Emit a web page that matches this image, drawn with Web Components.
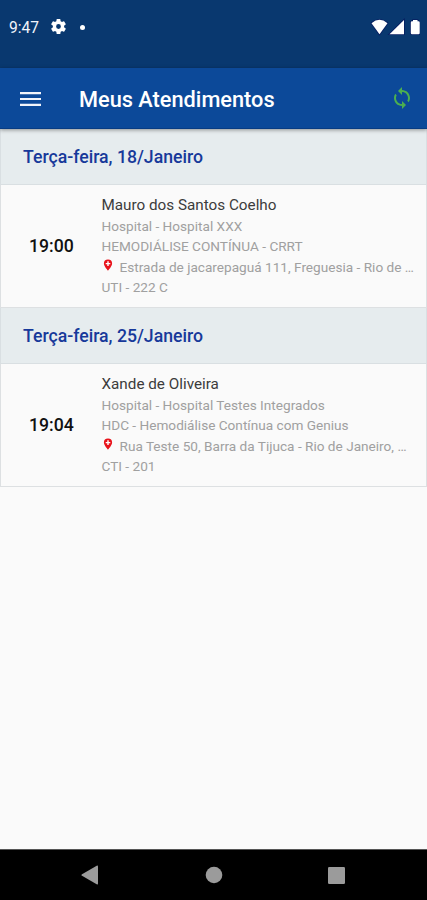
<!DOCTYPE html>
<html lang="pt-BR">
<head>
<meta charset="utf-8">
<meta name="viewport" content="width=device-width, initial-scale=1">
<title>Meus Atendimentos</title>
<style>
html,body{margin:0;height:100%}
body{background:#fafafa;font-family:Roboto,"Liberation Sans",sans-serif;overflow:hidden}
</style>
</head>
<body>
<care-app></care-app>
<script>
const define = (name, html) => {
  customElements.define(name, class extends HTMLElement {
    constructor() {
      super();
      const t = document.createElement('template');
      t.innerHTML = html;
      this.attachShadow({mode: 'open'}).append(t.content.cloneNode(true));
    }
  });
};

define('status-bar', `
<style>
:host{display:flex;height:68px;box-sizing:border-box;background:#09386f;color:#f1f4fb;padding:17px 7px 0 9px;align-items:flex-start;font-size:15.600px;line-height:23px}
time{width:42px;white-space:nowrap}
svg{display:block;flex:none}
.dot{width:5px;height:5px;border-radius:50%;background:#fff;margin:8px 0 0 13.500px}
.sp{flex:1}
</style>
<time>9:47</time>
<svg width="15" height="15" viewBox="2 2 20 20" fill="#fff" style="margin-top:2px"><path d="M19.4 13a7.500 7.500 0 0 0 0-2l2.100-1.650c.2-.15.25-.42.12-.64l-2-3.460a.5.5 0 0 0-.61-.22l-2.490 1a7.300 7.300 0 0 0-1.690-.98l-.38-2.650A.49.49 0 0 0 14 2h-4a.49.49 0 0 0-.49.42l-.38 2.650c-.61.25-1.170.59-1.690.98l-2.490-1a.5.5 0 0 0-.61.22l-2 3.460a.5.5 0 0 0 .12.64L4.570 11a7.900 7.900 0 0 0 0 2l-2.110 1.650a.5.5 0 0 0-.12.64l2 3.460c.12.22.39.3.61.22l2.490-1c.52.4 1.080.73 1.690.98l.38 2.650c.03.24.24.42.49.42h4c.25 0 .46-.18.49-.42l.38-2.650c.61-.25 1.170-.59 1.690-.98l2.490 1c.23.09.49 0 .61-.22l2-3.460a.5.5 0 0 0-.12-.64zM12 15.200a3.200 3.200 0 1 1 0-6.400 3.200 3.200 0 0 1 0 6.400z"/></svg>
<div class="dot"></div>
<div class="sp"></div>
<svg width="50" height="18" viewBox="0 0 50 18" fill="#fff" stroke="#071d60" stroke-width="1.600" paint-order="stroke" style="margin-top:1px"><path d="M1.500 5.200Q9.500-1.500 17.500 5.200L9.500 16.300z"/><path d="M34 2v14.200H19.500z"/><path d="M43 2h4.500v1.300h1q1.200 0 1.200 1.200v10.500q0 1.200-1.200 1.200h-6.500q-1.200 0-1.200-1.200V4.500q0-1.200 1.200-1.200h1z"/></svg>
`);

define('app-bar', `
<style>
:host{display:flex;align-items:center;height:61px;box-sizing:border-box;background:#0c4999;color:#fff;padding:0 13px 0 20px;position:relative;z-index:1;box-shadow:0 1px 4px rgba(0,0,0,.4);border-bottom:1px solid #083c83}
svg{display:block;flex:none}
h1{flex:1;margin:4px 0 0 38px;font-size:21.750px;font-weight:500;line-height:28px;white-space:nowrap}
</style>
<svg width="21" height="16" viewBox="0 0 21 16" fill="#f1f4fb" style="margin-top:1px"><path d="M0 1h21v2.200H0zM0 6.900h21v2.200H0zM0 12.800h21V15H0z"/></svg>
<h1><slot></slot></h1>
<svg width="24" height="24" viewBox="0 0 24 24" fill="#4caf50"><path d="M12 4V1L8 5l4 4V6c3.310 0 6 2.690 6 6 0 1.010-.25 1.970-.7 2.800l1.460 1.460A7.930 7.930 0 0 0 20 12c0-4.420-3.580-8-8-8zm0 14c-3.310 0-6-2.690-6-6 0-1.010.25-1.970.7-2.800L5.240 7.740A7.930 7.930 0 0 0 4 12c0 4.420 3.580 8 8 8v3l4-4-4-4v3z"/></svg>
`);

define('day-header', `
<style>
:host{display:block;height:56px;box-sizing:border-box;background:#e6ecee;color:#17399a;padding:17px 0 0 22px;font-size:17.650px;font-weight:500;line-height:23px;border:solid #d9dfe2;border-width:0 1px 1px}
</style>
<slot></slot>
`);

define('visit-row', `
<style>
:host{display:grid;grid-template-columns:100.500px minmax(0,1fr);height:123px;box-sizing:border-box;padding:10px 10px 0 0;border:solid #dde0e2;border-width:0 1px 1px;color:#a0a0a0;font-size:13.620px;line-height:20.600px;white-space:nowrap}
.time{align-self:start;margin-top:39px;padding-left:28px;color:#111;font-size:17.650px;font-weight:500;line-height:24px}
.name{color:#3c3c3c;font-size:15.250px}
.place{display:flex}
.place svg{display:block;flex:none;margin:2px 7px 0 1px}
</style>
<div class="time"><slot name="time"></slot></div>
<div>
<div class="name"><slot name="name"></slot></div>
<div><slot name="hospital"></slot></div>
<div><slot name="care"></slot></div>
<div class="place"><svg width="10" height="12" viewBox="0 0 10 12"><path fill="#e8131b" d="M5 .5a4.100 4.100 0 0 0-4.100 4.100C.9 7.500 5 11.700 5 11.700s4.100-4.200 4.100-7.100A4.100 4.100 0 0 0 5 .5z"/><path fill="#fff" d="M4.300 2.300h1.400v1.600h1.600v1.400H5.700v1.600H4.300V5.300H2.700V3.900h1.600z"/></svg><span><slot name="address"></slot></span></div>
<div><slot name="room"></slot></div>
</div>
`);

define('nav-bar', `
<style>
:host{display:flex;align-items:center;justify-content:space-between;height:51px;box-sizing:border-box;background:#000;border-top:1px solid #555;padding:0 82px 0 81px}
svg{display:block}
</style>
<svg width="18" height="20" viewBox="0 0 18 20"><path fill="#9b9b9b" d="M1 9.200 15.700.8q1.300-.7 1.300.7v17q0 1.400-1.300.7L1 10.800q-1.200-.8 0-1.600z"/></svg>
<svg width="18" height="18" viewBox="0 0 18 18"><circle cx="9" cy="9" r="8.300" fill="#9b9b9b"/></svg>
<svg width="17" height="17" viewBox="0 0 17 17"><rect width="17" height="17" rx="1.200" fill="#9b9b9b"/></svg>
`);

define('care-app', `
<style>
:host{display:flex;flex-direction:column;height:900px;background:#fafafa}
main{flex:1}
</style>
<status-bar></status-bar>
<app-bar>Meus Atendimentos</app-bar>
<main>
<day-header>Terça-feira, 18/Janeiro</day-header>
<visit-row><span slot="time">19:00</span><span slot="name">Mauro dos Santos Coelho</span><span slot="hospital">Hospital - Hospital XXX</span><span slot="care">HEMODIÁLISE CONTÍNUA - CRRT</span><span slot="address">Estrada de jacarepaguá 111, Freguesia - Rio de …</span><span slot="room">UTI - 222 C</span></visit-row>
<day-header>Terça-feira, 25/Janeiro</day-header>
<visit-row><span slot="time">19:04</span><span slot="name">Xande de Oliveira</span><span slot="hospital">Hospital - Hospital Testes Integrados</span><span slot="care">HDC - Hemodiálise Contínua com Genius</span><span slot="address">Rua Teste 50, Barra da Tijuca - Rio de Janeiro, …</span><span slot="room">CTI - 201</span></visit-row>
</main>
<nav-bar></nav-bar>
`);
</script>
</body>
</html>
